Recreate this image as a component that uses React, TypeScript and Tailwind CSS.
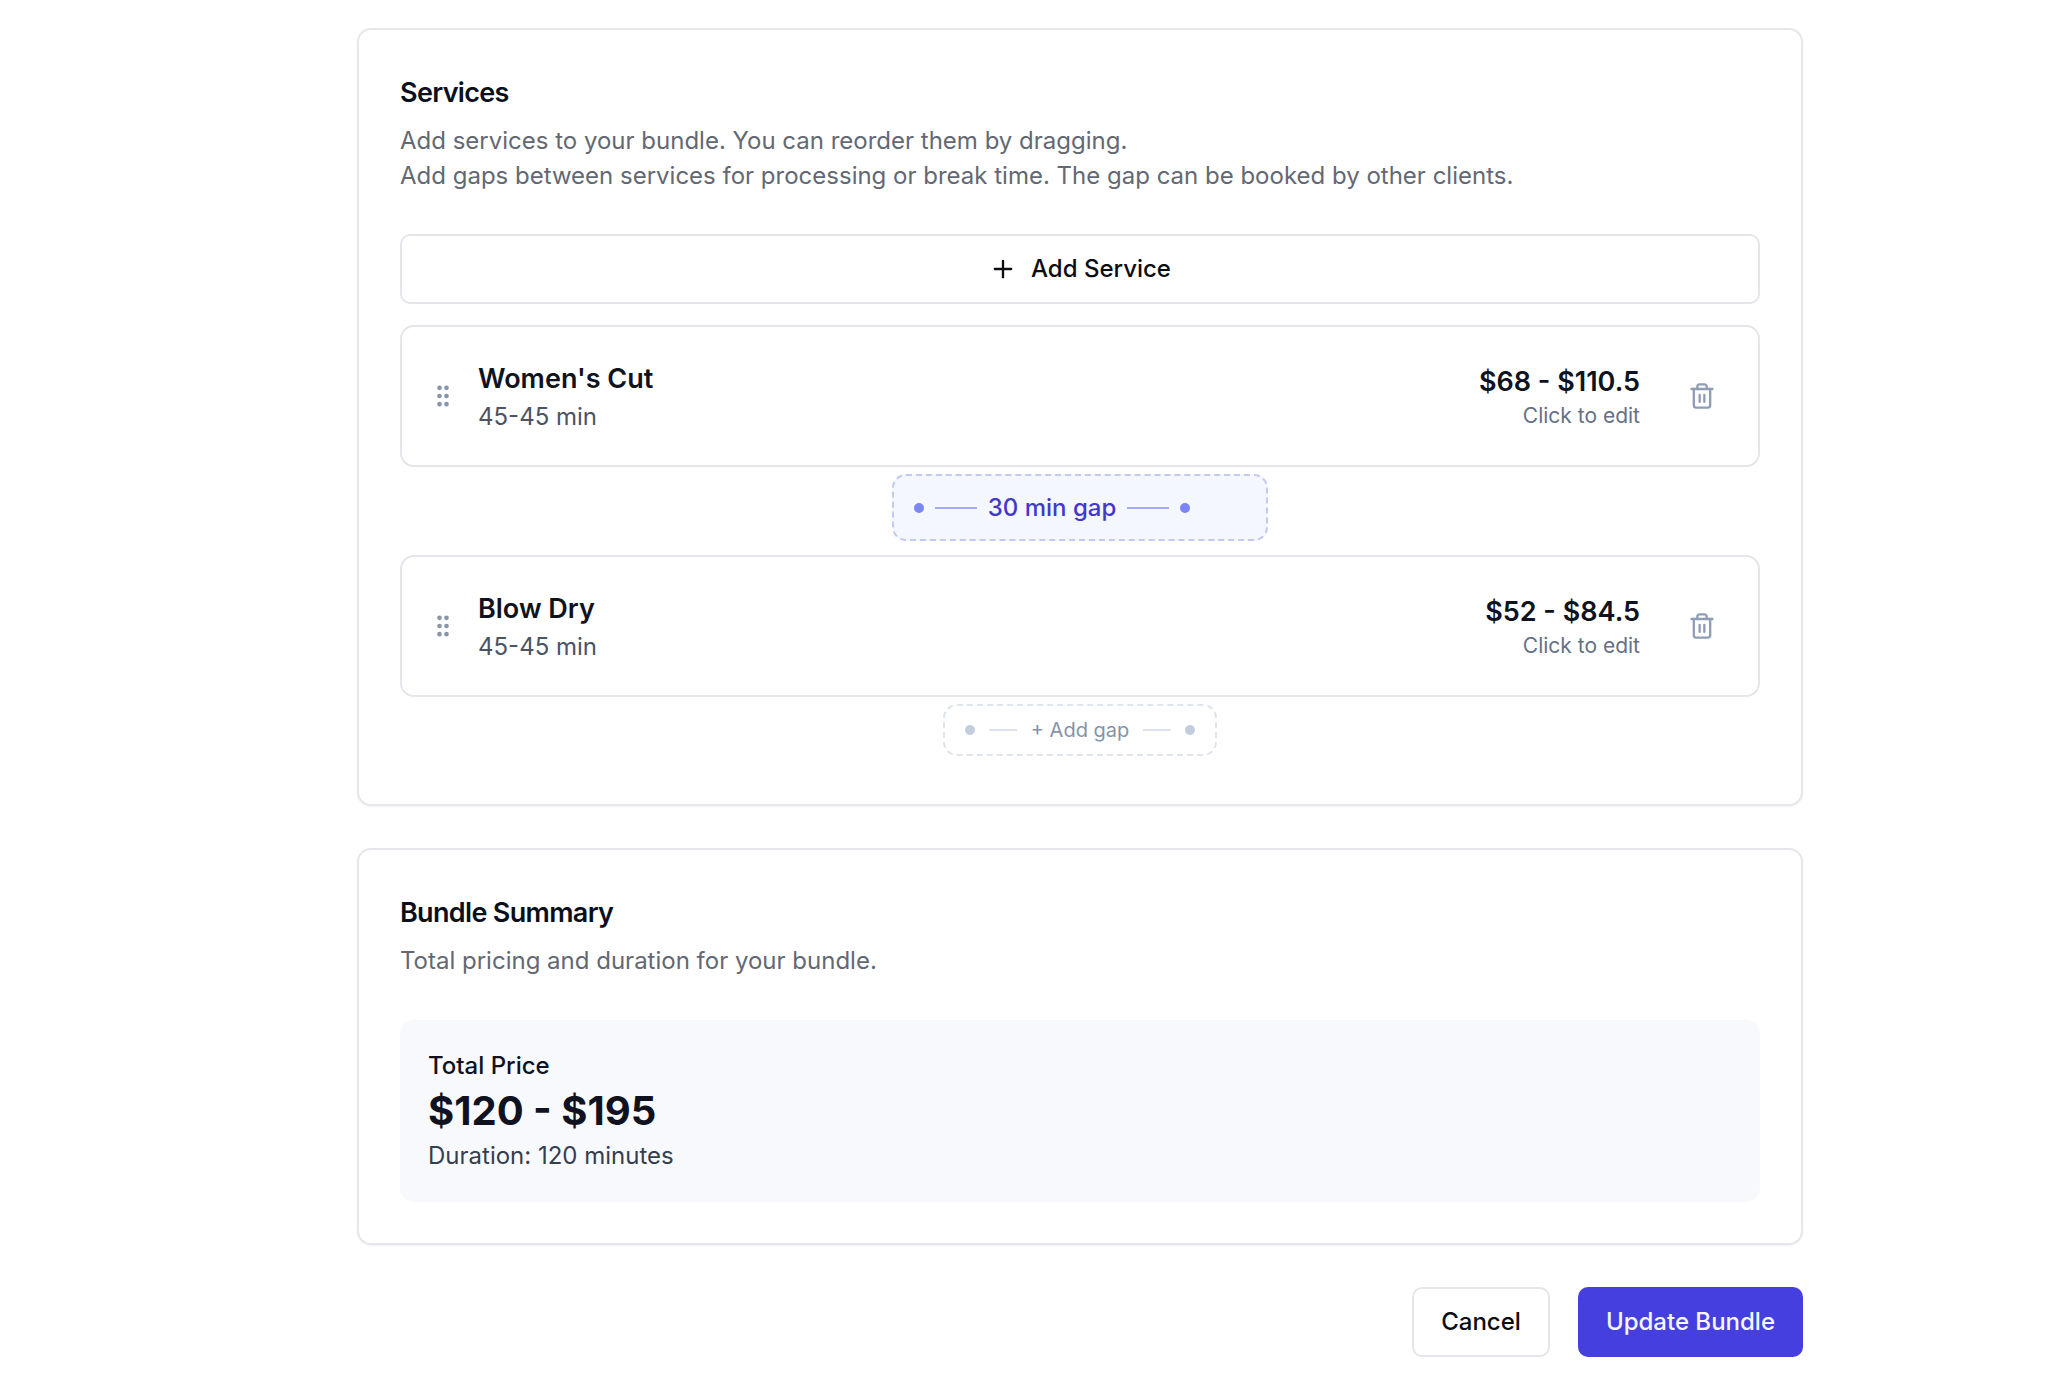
import { GripVertical, Plus, Trash2 } from "lucide-react";
import type { ReactNode } from "react";

type Service = { name: string; duration: string; price: string };

function Card({ title, description, children }: { title: string; description: ReactNode; children: ReactNode }) {
  return (
    <section className="rounded-[14px] border-2 border-[#e6e7eb] bg-white p-[41px] shadow-xs">
      <h2 className="pt-1 text-[27px] leading-9 font-semibold tracking-tight text-[#0b0f1c]">{title}</h2>
      <p className="mt-3 text-[24px] leading-[35px] text-[#636873]">{description}</p>
      {children}
    </section>
  );
}

function ServiceRow({ name, duration, price }: Service) {
  return (
    <li className="flex h-[142px] items-center rounded-[14px] border-2 border-[#e4e6ea] bg-white pr-[42px] pl-[27px]">
      <button type="button" aria-label={`Reorder ${name}`} className="text-[#8795ab]">
        <GripVertical size={28} />
      </button>
      <div className="ml-[21px] flex-1 pt-0.5">
        <h3 className="text-[27px] leading-[38px] font-semibold text-[#0f1320]">{name}</h3>
        <p className="text-[24px] leading-[37px] text-[#4a5463]">{duration}</p>
      </div>
      <button type="button" className="pt-1 text-right">
        <span className="block text-[27px] leading-9 font-semibold text-[#0f1320]">{price}</span>
        <span className="block text-[21px] leading-8 text-[#667085]">Click to edit</span>
      </button>
      <button type="button" aria-label={`Remove ${name}`} className="ml-12 text-[#8f9db5]">
        <Trash2 size={28} />
      </button>
    </li>
  );
}

export default function App() {
  return (
    <main className="min-h-screen bg-white pt-7 pr-[245px] pb-[38px] pl-[357px] font-[Inter,'DM_Sans',sans-serif]">
      <form onSubmit={(e) => e.preventDefault()}>
        <Card
          title="Services"
          description={
            <>
              Add services to your bundle. You can reorder them by dragging.
              <br />
              Add gaps between services for processing or break time. The gap can be booked by other clients.
            </>
          }
        >
          <button
            type="button"
            className="mt-[41px] flex h-[70px] w-full items-center justify-center gap-3.5 rounded-[10px] border-2 border-[#e4e6ea] text-[24px] font-medium text-[#0b0d12]"
          >
            <Plus size={28} />
            Add Service
          </button>
          <ul className="mt-[21px] flex flex-col">
            <ServiceRow name="Women's Cut" duration="45-45 min" price="$68 - $110.5" />
            <li className="flex justify-center pt-[7px] pb-3.5">
              <button
                type="button"
                className="flex h-[67px] items-center gap-[11px] rounded-[14px] border-2 border-dashed border-[#c4c9f2] bg-[#f4f7fe] pr-[76px] pl-5 text-[24px] font-medium text-[#4338ca]"
              >
                <span className="size-2.5 rounded-full bg-[#7b85f5]" />
                <span className="h-0.5 w-[42px] bg-[#a5acf5]" />
                30 min gap
                <span className="h-0.5 w-[42px] bg-[#a5acf5]" />
                <span className="size-2.5 rounded-full bg-[#7b85f5]" />
              </button>
            </li>
            <ServiceRow name="Blow Dry" duration="45-45 min" price="$52 - $84.5" />
            <li className="flex justify-center pt-[7px] pb-[7px]">
              <button
                type="button"
                className="flex h-[52px] items-center gap-3.5 rounded-[14px] border-2 border-dashed border-[#dfe4ed] px-5 text-[20px] text-[#8592a8]"
              >
                <span className="size-2.5 rounded-full bg-[#c3cddd]" />
                <span className="h-0.5 w-7 bg-[#dce3ec]" />
                + Add gap
                <span className="h-0.5 w-7 bg-[#dce3ec]" />
                <span className="size-2.5 rounded-full bg-[#c3cddd]" />
              </button>
            </li>
          </ul>
        </Card>

        <div className="mt-[42px]">
          <Card title="Bundle Summary" description="Total pricing and duration for your bundle.">
            <div className="mt-[42px] rounded-[14px] bg-[#f8f9fd] p-7">
              <p className="text-[24px] leading-9 font-medium text-[#0f1320]">Total Price</p>
              <p className="text-[40px] leading-[54px] font-bold text-[#10131f]">$120 - $195</p>
              <p className="text-[24px] leading-9 text-[#353e4d]">Duration: 120 minutes</p>
            </div>
          </Card>
        </div>

        <div className="mt-[42px] flex justify-end gap-7">
          <button
            type="button"
            className="h-[70px] rounded-[10px] border-2 border-[#e4e6ea] bg-white px-[27px] text-[24px] font-medium text-[#0b0d12]"
          >
            Cancel
          </button>
          <button type="submit" className="h-[70px] rounded-[10px] bg-[#463fe0] px-7 text-[24px] font-medium text-[#f5f6ff]">
            Update Bundle
          </button>
        </div>
      </form>
    </main>
  );
}
